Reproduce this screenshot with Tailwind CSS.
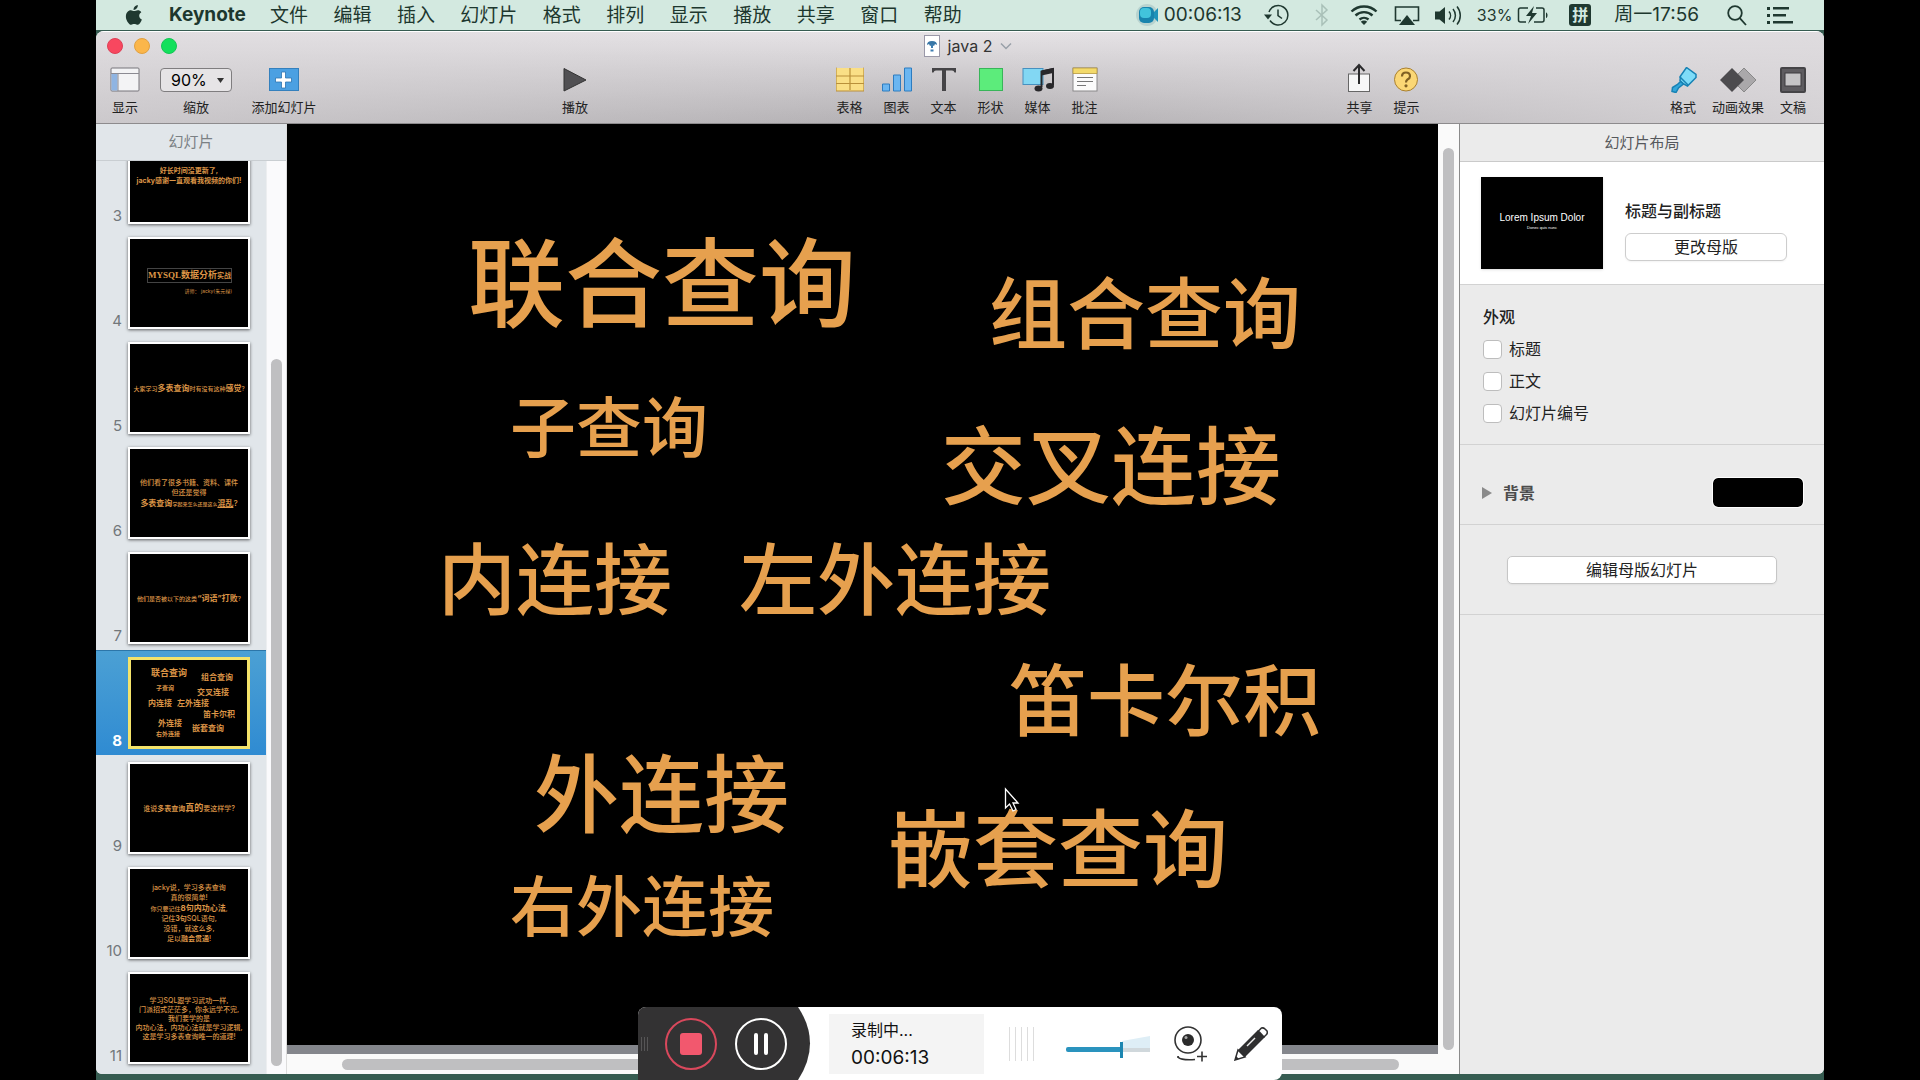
<!DOCTYPE html>
<html lang="zh-CN">
<head>
<meta charset="utf-8">
<title>java 2</title>
<script src="https://cdn.jsdelivr.net/npm/@tailwindcss/browser@4"></script>
</head>
<body class="bg-black font-['Inter','Noto_Sans_CJK_SC',sans-serif] text-[#222]">
<div class="relative mx-[5%] flex h-screen flex-col overflow-hidden bg-[#365c51]">

  <!-- Menu bar -->
  <header class="flex h-[30px] shrink-0 items-center bg-[#d3e9e0] pr-[31px] pl-7 text-[19px] leading-7 text-[#1d372e]">
    <svg class="h-6 w-5 shrink-0" viewBox="0 0 20 24" fill="#1f3830"><path d="M13.8 2c.2 1.5-.4 2.7-1.2 3.6-.8.9-1.9 1.5-3 1.4-.2-1.3.4-2.6 1.2-3.5C11.6 2.7 12.8 2.1 13.8 2zM17.3 9.2c-1.3.8-2.1 2-2.1 3.5 0 1.8 1.1 3.2 2.7 3.8-.4 1.2-1 2.4-1.8 3.4-.8 1.1-1.6 1.9-2.9 1.9-1.2 0-1.6-.7-3-.7s-1.9.7-3 .7c-1.3 0-2.2-1-3-2.1C1.6 16.7 1 11.5 3.4 9c.9-1.1 2.2-1.7 3.5-1.7 1.3 0 2.2.8 3.3.8 1.1 0 2-.8 3.6-.8 1.3 0 2.6.6 3.5 1.9z"/></svg>
    <span class="ml-[25px] font-bold">Keynote</span>
    <nav class="ml-6 flex w-[692px] shrink-0 justify-between pt-0.5 whitespace-nowrap">
      <a href="#">文件</a><a href="#">编辑</a><a href="#">插入</a><a href="#">幻灯片</a><a href="#">格式</a><a href="#">排列</a><a href="#">显示</a><a href="#">播放</a><a href="#">共享</a><a href="#">窗口</a><a href="#">帮助</a>
    </nav>
    <div class="ml-auto flex shrink-0 items-center whitespace-nowrap">
      <svg class="h-6 w-6" viewBox="0 0 24 24"><circle cx="12" cy="12" r="11" fill="#b8d3cf"/><path d="M19 9l4-4v14l-4-4z" fill="#1e93ba"/><rect x="4" y="4" width="15" height="16" rx="5" fill="#1784ad"/><rect x="5" y="5" width="11" height="10" rx="4" fill="#41c4dc"/></svg>
      <span class="ml-[5px]">00:06:13</span>
      <svg class="ml-[22px] h-6 w-[26px]" viewBox="0 0 26 24" fill="none" stroke="#1f3830" stroke-width="1.5"><path d="M5 9a9.7 9.7 0 1 1 1 8.5"/><path d="M14 6.5v6l4 3"/><path d="M0 11.5h8l-4 5z" fill="#1f3830" stroke="none"/></svg>
      <svg class="ml-[25px] h-6 w-[14px]" viewBox="0 0 14 24" fill="none" stroke="#a9c0b8" stroke-width="1.5"><path d="M1 7l11 10-5 5V2l5 5L1 17"/></svg>
      <svg class="ml-[21px] h-6 w-7" viewBox="0 0 28 24" fill="none" stroke="#1f3830" stroke-width="2.4"><path d="M1.5 8.5a18 18 0 0 1 25 0M5.5 12.5a12.5 12.5 0 0 1 17 0M9.5 16.5a7 7 0 0 1 9 0"/><path d="M10.8 18.8a4.5 4.5 0 0 1 6.4 0L14 22z" fill="#1f3830" stroke="none"/></svg>
      <svg class="ml-4 h-6 w-[26px]" viewBox="0 0 26 24"><path d="M7 17.5H1.5V4h23v13.5H19" fill="none" stroke="#1f3830" stroke-width="1.6"/><path d="M13 12l8 10H5z" fill="#1f3830"/></svg>
      <svg class="ml-[14px] h-6 w-[30px]" viewBox="0 0 30 24" fill="none" stroke="#1f3830" stroke-width="1.5"><path d="M1 8.5h4.5L11 4v17l-5.5-4.5H1z" fill="#1f3830" stroke="none"/><path d="M15 8.5a6 6 0 0 1 0 8M19 6a10 10 0 0 1 0 13M23 3.5a14 14 0 0 1 0 18"/></svg>
      <span class="ml-[13px] text-base">33%</span>
      <svg class="ml-[5px] h-6 w-8" viewBox="0 0 32 24" fill="none" stroke="#1f3830" stroke-width="1.5"><path d="M11 5H3.5A2 2 0 0 0 1.5 7v10a2 2 0 0 0 2 2H9M19 5h6a2 2 0 0 1 2 2v10a2 2 0 0 1-2 2h-8"/><path d="M29 9.5c2 .5 2 5 0 5.5z" fill="#1f3830" stroke="none"/><path d="M17 3l-8 10h5l-3 8 9-11h-5z" fill="#1f3830" stroke="none"/></svg>
      <span class="ml-5 flex h-[22px] w-[22px] items-center justify-center rounded-[3px] bg-[#1f3830] text-base leading-5 font-bold text-[#d3e9e0]">拼</span>
      <span class="ml-[23px]">周一17:56</span>
      <svg class="ml-7 h-6 w-5" viewBox="0 0 20 24" fill="none" stroke="#1f3830" stroke-width="1.8"><circle cx="8" cy="10" r="6.8"/><path d="M12.8 15.2L19 22"/></svg>
      <svg class="ml-5 h-6 w-[26px]" viewBox="0 0 26 24" fill="#1f3830"><path d="M0 4h3v3H0zM6 4h16v2.5H6zM0 11h3v3H0zM6 11h13v2.5H6zM0 18h3v3H0zM6 18h20v2.5H6z"/></svg>
    </div>
  </header>

  <div class="mt-px mb-1.5 flex min-h-0 flex-1 flex-col overflow-hidden rounded-t-lg rounded-b-md bg-[#ececec]">

    <!-- Title bar and toolbar -->
    <div class="relative flex h-[93px] shrink-0 flex-col border-t border-b border-t-white border-b-[#8d8b8d] bg-linear-to-b from-[#e6e3e6] to-[#b2afb2]">
      <div class="absolute inset-0 bg-linear-to-r from-[#dddadd]/60 via-transparent to-[#dddadd]/80"></div>
      <div class="relative flex h-7 items-center justify-center">
        <div class="absolute left-[11px] flex gap-[11px]">
          <button aria-label="关闭" class="size-4 rounded-full border border-[#dd3f56] bg-[#f8475f]"></button>
          <button aria-label="最小化" class="size-4 rounded-full border border-[#e0a040] bg-[#fbb64a]"></button>
          <button aria-label="缩放窗口" class="size-4 rounded-full border border-[#14c555] bg-[#13e05c]"></button>
        </div>
        <svg class="ml-4 h-[22px] w-4" viewBox="0 0 16 22"><rect x=".5" y=".5" width="15" height="21" fill="#fff" stroke="#9a98a8"/><path d="M3 10q0-4 5-4t5 4l-2-1-1 2-2-1-2 1-1-2z" fill="#3876a6"/><path d="M8 9v4M6.5 15.5h3" stroke="#3e7db0" stroke-width="2"/></svg>
        <span class="ml-2 text-base text-[#333]">java 2</span>
        <svg class="ml-2 h-2 w-3" viewBox="0 0 12 8" fill="none" stroke="#98a0a8" stroke-width="1.5"><path d="M1 1.5l5 5 5-5"/></svg>
      </div>
      <div class="relative flex flex-1 items-start px-[14px] pt-[7px] text-[13px] leading-5 whitespace-nowrap">
        <button class="flex w-[30px] flex-col items-center gap-1"><svg class="h-[26px] w-[30px]" viewBox="0 0 30 26"><rect x="1" y="1" width="28" height="23" rx="1" fill="#f3f3f5" stroke="#77757a"/><path d="M1.5 6.5h6v17h-6z" fill="#8fb4e2"/><path d="M1 6.5h28M8 6.5V24" stroke="#8b8a92" fill="none"/></svg>显示</button>
        <div class="ml-5 flex w-[72px] flex-col items-center gap-1">
          <div class="relative my-px w-full">
            <select id="zoom" class="block h-6 w-full appearance-none rounded-[4px] border border-[#7f7d7f] bg-[#e6e4e6] pl-2.5 text-base leading-5 text-black"><option>90%</option></select>
            <svg class="pointer-events-none absolute top-2.5 right-2 h-[5px] w-[7px]" viewBox="0 0 7 5"><path d="M0 0h7L3.5 5z" fill="#333"/></svg>
          </div>
          <label for="zoom">缩放</label>
        </div>
        <button class="ml-[18px] flex w-[68px] flex-col items-center gap-1"><svg class="h-[26px] w-8" viewBox="0 0 32 26"><rect x="1.5" y="1.5" width="29" height="22" fill="#4ba0e2" stroke="#3480bd"/><path d="M13.5 5h4v6h6v4h-6v6h-4v-6h-6v-4h6z" fill="#fff" stroke="#2d74b0" stroke-width=".8"/></svg>添加幻灯片</button>
        <div class="flex-[240]"></div>
        <button class="flex w-[30px] flex-col items-center gap-1"><svg class="h-[26px] w-6" viewBox="0 0 24 26"><path d="M1 1.5L23 13 1 24z" fill="#515053" stroke="#333"/></svg>播放</button>
        <div class="flex-[234]"></div>
        <div class="flex">
          <button class="flex w-[47px] flex-col items-center gap-1"><svg class="h-[26px] w-7" viewBox="0 0 28 26"><rect x="0" y="1" width="28" height="23" fill="#fadf86"/><path d="M0 .5v23.5h28V.5M0 9h28M0 16.5h28M14 1v22" fill="none" stroke="#b9903a" stroke-width="1.2"/></svg>表格</button>
          <button class="flex w-[47px] flex-col items-center gap-1"><svg class="h-[26px] w-8" viewBox="0 0 32 26" fill="#6bb6f1" stroke="#2d7cc0"><path d="M1.5 17h7v7h-7zM12.5 8h7v16h-7zM23.5 1h7v23h-7z"/></svg>图表</button>
          <button class="flex w-[47px] flex-col items-center gap-1"><svg class="h-[26px] w-6" viewBox="0 0 24 26"><path d="M0 1h24v4.5h-1.5Q22 3.5 20 3.5h-6V24h-4V3.5H4Q2 3.5 1.5 5.5H0z" fill="#454447"/></svg>文本</button>
          <button class="flex w-[47px] flex-col items-center gap-1"><svg class="h-[26px] w-[26px]" viewBox="0 0 26 26"><rect x="1.5" y="1.5" width="23" height="22" fill="#5cec7b" stroke="#38b559"/></svg>形状</button>
          <button class="flex w-[47px] flex-col items-center gap-1"><svg class="h-[26px] w-8" viewBox="0 0 32 26"><rect x="1" y="1.5" width="20" height="16" fill="#82d7f3" stroke="#4790bf"/><path d="M19.5 20V4.5L31 2v16" fill="none" stroke="#29282b" stroke-width="2"/><path d="M19.5 3.5L31 1v5l-11.5 2.5z" fill="#29282b"/><ellipse cx="16.5" cy="21.5" rx="4" ry="3" fill="#29282b"/><ellipse cx="28" cy="19" rx="4" ry="3" fill="#29282b"/></svg>媒体</button>
          <button class="flex w-[47px] flex-col items-center gap-1"><svg class="h-[26px] w-[26px]" viewBox="0 0 26 26"><rect x="1" y="1" width="24" height="23" fill="#fbfbfb" stroke="#8a888a"/><path d="M1 1h24v5.5H1z" fill="#f3da6b" stroke="#b5983f" stroke-width=".8"/><path d="M5 10.5h16M5 14.5h16M5 18.5h9" stroke="#777"/></svg>批注</button>
        </div>
        <div class="flex-[226]"></div>
        <div class="flex">
          <button class="flex w-[47px] flex-col items-center gap-1"><svg class="h-[26px] w-6 overflow-visible" viewBox="0 0 24 26"><rect x="1.5" y="7" width="21" height="17.5" fill="#f7f7f8" stroke="#666"/><path d="M12 17V-1M6.5 4L12-2l5.5 6" fill="none" stroke="#2b2b2d" stroke-width="2"/></svg>共享</button>
          <button class="flex w-[47px] flex-col items-center gap-1"><svg class="h-[26px] w-[26px]" viewBox="0 0 26 26"><circle cx="13" cy="12.5" r="11.5" fill="#fbd775" stroke="#a98030"/><path d="M9 9.5q0-4 4-4t4 3.7q0 2-2.5 3.3-1.5 1-1.5 3" fill="none" stroke="#806024" stroke-width="2.2"/><circle cx="13" cy="18.8" r="1.6" fill="#806024"/></svg>提示</button>
        </div>
        <div class="flex-[236]"></div>
        <button class="flex w-[30px] flex-col items-center gap-1"><svg class="h-[26px] w-[30px]" viewBox="0 0 30 26"><path d="M18.5 .5L28 7.5v3L19.5 19l-4-2L12 13.5 12.5 9z" fill="#7edcf8" stroke="#1782b4" stroke-width="1.5"/><path d="M11.5 9.5L20 18M12.5 14.5l3 2.5-5 4L8 25.5l-4-1 .5-4 5-3z" fill="#32a6da" stroke="#1782b4" stroke-width="1.5"/></svg>格式</button>
        <button class="ml-3 flex w-[56px] flex-col items-center gap-1"><svg class="h-[26px] w-9" viewBox="0 0 36 26"><path d="M24 1l12 12-12 12-12-12z" fill="#aaa8aa" stroke="#888"/><path d="M12 1l12 12-12 12L0 13z" fill="#4c4b4e"/></svg>动画效果</button>
        <button class="mr-0.5 ml-3 flex w-[30px] flex-col items-center gap-1"><svg class="h-[26px] w-[26px]" viewBox="0 0 26 26"><rect x="1" y="1" width="24" height="24" rx="1" fill="#5e5c60" stroke="#454447" stroke-width="2"/><rect x="5" y="6" width="16" height="13" fill="#c5c4c6" stroke="#3c3b3e"/></svg>文稿</button>
      </div>
    </div>

    <div class="flex min-h-0 flex-1">

      <!-- Slide navigator -->
      <aside class="flex w-[190px] shrink-0 flex-col bg-[#e1e6ea]">
        <h2 class="flex h-[37px] shrink-0 items-center justify-center border-b border-[#c9ced2] text-[15px] text-[#7b8185]">幻灯片</h2>
        <div class="flex min-h-0 flex-1">
          <ol class="min-w-0 flex-1 overflow-hidden text-[15px] leading-4 text-[#72777b]">
            <li class="-mt-9 flex h-[105px] items-end gap-1.5 py-1.5">
              <span class="w-[26px] text-right">3</span>
              <div class="flex h-[92px] w-[122px] flex-col items-center justify-center border-2 border-white bg-black pb-1 text-[7px] leading-[10px] font-bold whitespace-nowrap text-[#dc9547] shadow-[0_1px_3px_rgba(0,0,0,0.6)]"><p>好长时间没更新了,</p><p>jacky感谢一直观看我视频的你们!</p></div>
            </li>
            <li class="flex h-[105px] items-end gap-1.5 py-1.5">
              <span class="w-[26px] text-right">4</span>
              <div class="flex h-[92px] w-[122px] flex-col items-end justify-center border-2 border-white bg-black pr-4 pb-1 text-[#dc9547] shadow-[0_1px_3px_rgba(0,0,0,0.6)]"><p class="border border-[#444] font-['Liberation_Serif','Noto_Sans_CJK_SC',serif] text-[9px] leading-3 font-bold whitespace-nowrap">MYSQL数据分析<span class="text-[7px]">实战</span></p><p class="mt-1 text-[5px] leading-2 whitespace-nowrap">讲师： jacky(朱元禄)</p></div>
            </li>
            <li class="flex h-[105px] items-end gap-1.5 py-1.5">
              <span class="w-[26px] text-right">5</span>
              <div class="flex h-[92px] w-[122px] items-center justify-center border-2 border-white bg-black text-[6px] font-medium whitespace-nowrap text-[#dc9547] shadow-[0_1px_3px_rgba(0,0,0,0.6)]"><p>大家学习<b class="text-[8px]">多表查询</b>时有没有这种<b class="text-[8px]">感觉</b>?</p></div>
            </li>
            <li class="flex h-[105px] items-end gap-1.5 py-1.5">
              <span class="w-[26px] text-right">6</span>
              <div class="flex h-[92px] w-[122px] flex-col items-center justify-center border-2 border-white bg-black text-[7px] leading-[10px] font-medium whitespace-nowrap text-[#dc9547] shadow-[0_1px_3px_rgba(0,0,0,0.6)]"><p>他们看了很多书籍、资料、课件</p><p>但还是觉得</p><p class="text-[5px]"><b class="text-[8px]">多表查询</b>学起来怎么还是这么<b class="text-[8px] underline">混乱</b><span class="text-[8px]">?</span></p></div>
            </li>
            <li class="flex h-[105px] items-end gap-1.5 py-1.5">
              <span class="w-[26px] text-right">7</span>
              <div class="flex h-[92px] w-[122px] items-center justify-center border-2 border-white bg-black text-[6px] font-medium whitespace-nowrap text-[#dc9547] shadow-[0_1px_3px_rgba(0,0,0,0.6)]"><p>他们是否被以下的这类<b class="text-[8px]">“词语”打败</b>?</p></div>
            </li>
            <li class="flex h-[105px] items-end gap-1.5 border-t border-[#2c76a9] bg-linear-to-b from-[#4ba0d4] to-[#2f8bd2] py-1.5">
              <span class="w-[26px] text-right font-bold text-white">8</span>
              <div class="relative h-[92px] w-[122px] border-[3px] border-[#f4e36a] bg-black text-[8px] leading-[8px] font-bold whitespace-nowrap text-[#dc9547]">
                <span class="absolute top-[9px] left-[20px] text-[9px]">联合查询</span>
                <span class="absolute top-[13px] left-[70px]">组合查询</span>
                <span class="absolute top-[24px] left-[25px] text-[6px]">子查询</span>
                <span class="absolute top-[28px] left-[66px]">交叉连接</span>
                <span class="absolute top-[39px] left-[17px]">内连接</span>
                <span class="absolute top-[39px] left-[46px]">左外连接</span>
                <span class="absolute top-[50px] left-[72px]">笛卡尔积</span>
                <span class="absolute top-[59px] left-[27px]">外连接</span>
                <span class="absolute top-[64px] left-[61px]">嵌套查询</span>
                <span class="absolute top-[70px] left-[25px] text-[6px]">右外连接</span>
              </div>
            </li>
            <li class="flex h-[105px] items-end gap-1.5 py-1.5">
              <span class="w-[26px] text-right">9</span>
              <div class="flex h-[92px] w-[122px] items-center justify-center border-2 border-white bg-black text-[7px] font-medium whitespace-nowrap text-[#dc9547] shadow-[0_1px_3px_rgba(0,0,0,0.6)]"><p>谁说<b>多表查询</b><b class="text-[9px]">真的</b>要这样学?</p></div>
            </li>
            <li class="flex h-[105px] items-end gap-1.5 py-1.5">
              <span class="w-[26px] text-right">10</span>
              <div class="flex h-[92px] w-[122px] flex-col items-center justify-center border-2 border-white bg-black text-[7px] leading-[10px] font-medium whitespace-nowrap text-[#dc9547] shadow-[0_1px_3px_rgba(0,0,0,0.6)]"><p>jacky说，学习多表查询</p><p>真的很简单!</p><p class="text-[6px]">你只要记住<b class="text-[8px]">8句内功心法</b>,</p><p>记住<b>3句</b>SQL语句,</p><p>没错，就这么多,</p><p>足以<b>融会贯通</b>!</p></div>
            </li>
            <li class="flex h-[105px] items-end gap-1.5 py-1.5">
              <span class="w-[26px] text-right">11</span>
              <div class="flex h-[92px] w-[122px] flex-col items-center justify-center border-2 border-white bg-black text-[7px] leading-[9px] font-medium whitespace-nowrap text-[#dc9547] shadow-[0_1px_3px_rgba(0,0,0,0.6)]"><p>学习SQL跟学习武功一样,</p><p>门派招式茫茫多，你永远学不完,</p><p>我们要学的是</p><p>内功心法，内功心法就是学习逻辑,</p><p>这是学习多表查询唯一的道理!</p></div>
            </li>
          </ol>
          <div class="flex w-5 flex-col items-center border-l border-[#eceef0] bg-[#fafafc] pt-[198px] pb-2"><div class="w-[11px] flex-1 rounded-full bg-[#bfbfc1]"></div></div>
        </div>
      </aside>

      <!-- Slide canvas -->
      <main class="flex min-w-0 flex-1 flex-col border-l border-[#dcdcdc]">
        <div class="flex min-h-0 flex-1">
          <div class="flex min-w-0 flex-1 flex-col bg-[#84868c] pb-[9px]">
            <div class="relative flex-1 overflow-hidden bg-black font-medium whitespace-nowrap text-[#e6a04e]">
              <p class="absolute top-[111px] left-[181px] text-[97px] leading-[97px]">联合查询</p>
              <p class="absolute top-[152px] left-[702px] text-[78px] leading-[78px]">组合查询</p>
              <p class="absolute top-[271px] left-[223px] text-[66px] leading-[66px]">子查询</p>
              <p class="absolute top-[301px] left-[654px] text-[85px] leading-[85px]">交叉连接</p>
              <p class="absolute top-[418px] left-[151px] text-[78px] leading-[78px]">内连接</p>
              <p class="absolute top-[418px] left-[452px] text-[78px] leading-[78px]">左外连接</p>
              <p class="absolute top-[539px] left-[722px] text-[78px] leading-[78px]">笛卡尔积</p>
              <p class="absolute top-[629px] left-[247px] text-[85px] leading-[85px]">外连接</p>
              <p class="absolute top-[684px] left-[601px] text-[85px] leading-[85px]">嵌套查询</p>
              <p class="absolute top-[750px] left-[223px] text-[66px] leading-[66px]">右外连接</p>
              <svg class="absolute top-[663px] left-[717px] h-[26px] w-[16px]" viewBox="0 0 16 26"><path d="M1.5 2v19l4-4 3.5 7 3-1.5-3-6.5h5z" fill="#000" stroke="#fff" stroke-width="1.3"/></svg>
            </div>
          </div>
          <div class="flex w-[21px] flex-col items-center bg-[#fafafa] pt-6 pb-1"><div class="w-[11px] flex-1 rounded-full bg-[#bfbfc1]"></div></div>
        </div>
        <div class="flex h-5 shrink-0 items-center bg-[#fafafa] pr-[60px] pl-[55px]"><div class="h-[11px] flex-1 rounded-full bg-[#bfbfc1]"></div></div>
      </main>

      <!-- Inspector -->
      <aside class="w-[365px] shrink-0 border-l border-[#8a8a8a] bg-[#ebebeb] text-base leading-6">
        <h2 class="flex h-[38px] items-center justify-center border-b border-[#cacaca] text-[15px] text-[#56585c]">幻灯片布局</h2>
        <section class="flex h-[123px] items-center gap-[22px] border-b border-[#d2d2d2] bg-white pl-[21px]">
          <div class="flex h-[92px] w-[122px] flex-col items-center justify-center bg-black pb-0.5 font-['Liberation_Sans',sans-serif] text-white shadow-sm"><span class="text-[10px] leading-3">Lorem Ipsum Dolor</span><span class="text-[4px] leading-2">Donec quis nunc</span></div>
          <div class="flex w-[162px] flex-col gap-2 pt-3">
            <h3 class="leading-7 font-medium">标题与副标题</h3>
            <button class="h-7 rounded-md border border-[#cdcdcd] bg-white leading-6 shadow-xs">更改母版</button>
          </div>
        </section>
        <section class="flex h-40 flex-col gap-2 border-b border-[#d2d2d2] pt-5 pl-[23px]">
          <h3 class="font-medium">外观</h3>
          <label class="flex items-center gap-[7px]"><input type="checkbox" class="size-[19px] appearance-none rounded-[4px] border border-[#bdbdbd] bg-white">标题</label>
          <label class="flex items-center gap-[7px]"><input type="checkbox" class="size-[19px] appearance-none rounded-[4px] border border-[#bdbdbd] bg-white">正文</label>
          <label class="flex items-center gap-[7px]"><input type="checkbox" class="size-[19px] appearance-none rounded-[4px] border border-[#bdbdbd] bg-white">幻灯片编号</label>
        </section>
        <section class="flex h-20 items-center border-b border-[#d2d2d2] pt-5 pr-[21px] pb-1 pl-[22px]">
          <svg class="h-3 w-2.5" viewBox="0 0 10 12"><path d="M0 0l10 6-10 6z" fill="#8a8a8a"/></svg>
          <h3 class="ml-[11px] font-bold text-[#4c4c4c]">背景</h3>
          <button aria-label="背景颜色" class="ml-auto h-[29px] w-[90px] rounded-[5px] bg-black outline outline-white"></button>
        </section>
        <section class="flex h-[90px] items-center border-b border-[#d2d2d2] px-[47px]">
          <button class="h-7 w-full rounded-[5px] border border-[#c6c6c6] bg-white leading-6 shadow-xs">编辑母版幻灯片</button>
        </section>
      </aside>
    </div>
  </div>

  <!-- Screen recorder panel -->
  <div class="absolute bottom-0 left-1/2 flex h-[73px] w-[644px] -translate-x-1/2 items-center overflow-hidden rounded-lg rounded-bl-none bg-white">
    <svg class="absolute inset-0 h-full w-[173px]" viewBox="0 0 173 73"><path d="M0 0h160q24 36 0 73H0z" fill="#333233"/><path d="M3.5 30v14M6.5 30v14M9.5 30v14" stroke="#565556"/></svg>
    <button aria-label="停止" class="relative ml-[27px] flex size-[52px] items-center justify-center rounded-full border-2 border-[#d9485c]"><span class="size-[22px] rounded-[3px] bg-[#f2586e]"></span></button>
    <button aria-label="暂停" class="relative ml-[18px] flex size-[52px] items-center justify-center gap-[6px] rounded-full border-2 border-white"><span class="h-[22px] w-1 rounded-full bg-white"></span><span class="h-[22px] w-1 rounded-full bg-white"></span></button>
    <div class="ml-[42px] flex h-[60px] w-[155px] flex-col justify-center bg-[#f4f4f4] pl-[22px] text-[#111]"><span class="text-base leading-[27px]">录制中...</span><span class="text-[19px] leading-[27px]">00:06:13</span></div>
    <div class="ml-[25px] flex h-[34px] w-[25px] justify-between"><i class="w-px bg-[#ddd]"></i><i class="w-px bg-[#ddd]"></i><i class="w-px bg-[#ddd]"></i><i class="w-px bg-[#ddd]"></i><i class="w-px bg-[#ddd]"></i></div>
    <div class="relative ml-8 h-6 w-[84px] pt-1">
      <svg class="h-6 w-[84px]" viewBox="0 0 84 24"><path d="M56 5L84 0v16H56z" fill="#deeef6"/><path d="M56 12h28v4H56z" fill="#d0d8dc"/><rect y="11" width="57" height="5" rx="2" fill="#2a93be"/><rect x="54" y="6" width="3" height="16" fill="#1c86b1"/></svg>
      <input type="range" aria-label="音量" value="66" class="absolute inset-0 w-full opacity-0">
    </div>
    <button aria-label="摄像头" class="ml-6"><svg class="h-9 w-[34px]" viewBox="0 0 34 36" fill="none" stroke="#333" stroke-width="1.6"><circle cx="14" cy="14" r="13"/><circle cx="14" cy="14" r="6" fill="#2b2b2b" stroke="none"/><circle cx="12" cy="11.5" r="1.5" fill="#aaa" stroke="none"/><path d="M4 30q0 4.5 17 3.5M4 32v-2M28 25.5v10M23 30.5h10"/></svg></button>
    <button aria-label="标注" class="ml-[26px]"><svg class="h-[34px] w-[34px]" viewBox="0 0 34 34"><path d="M24 3l7 7-20 20-7-7z" fill="#2f2f30"/><path d="M4 23l7 7-10 3zM24.5 4l3-3q2-.5 3.5 1l2 2q.8 2-.5 3.5L30 10z" fill="#fff" stroke="#2f2f30" stroke-width="1.5"/><path d="M1 33l4-1-3-3z" fill="#2f2f30"/><path d="M13 19l8-8" stroke="#eee" stroke-width="1.5"/></svg></button>
  </div>
</div>
</body>
</html>
